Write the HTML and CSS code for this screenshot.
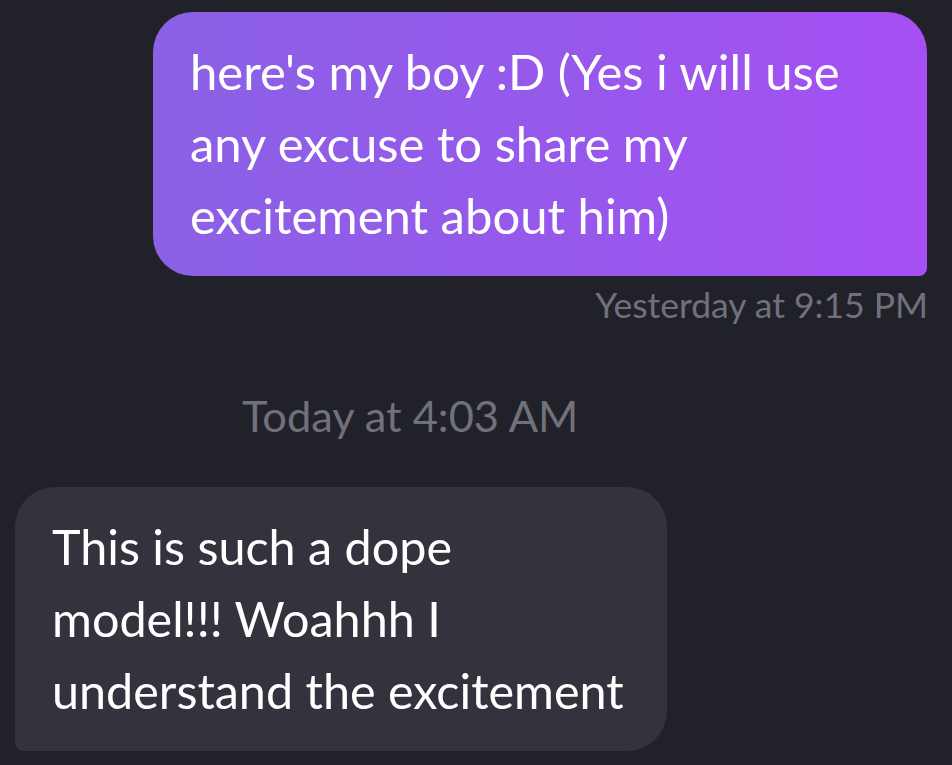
FILE: index.html
```html
<!DOCTYPE html>
<html lang="en">
<head>
<meta charset="utf-8">
<title>Chat</title>
<link rel="stylesheet" href="styles.css">
</head>
<body>
<main class="chat">
  <div class="msg msg-out">
    <div class="bubble bubble-out">here's my boy :D (Yes i will use<br>any excuse to share my<br>excitement about him)</div>
    <div class="stamp stamp-out">Yesterday at 9:15 PM</div>
  </div>
  <div class="day-stamp">Today at 4:03 AM</div>
  <div class="msg msg-in">
    <div class="bubble bubble-in">This is such a dope<br>model!!! Woahhh I<br>understand the excitement</div>
  </div>
</main>
</body>
</html>
```
FILE: styles.css
```css
html, body {
  margin: 0;
  padding: 0;
  background: #21212a;
}
body {
  font-family: "Lato", "Open Sans", sans-serif;
  color: #ffffff;
  width: 952px;
  height: 765px;
  overflow: hidden;
}
.chat {
  display: flex;
  flex-direction: column;
  padding: 12px 25px 0 15px;
}
.msg {
  display: flex;
  flex-direction: column;
}
.msg-out {
  align-items: flex-end;
}
.msg-in {
  align-items: flex-start;
}
.bubble {
  box-sizing: border-box;
  height: 264px;
  padding: 23px 37px 0 37px;
  line-height: 72px;
  white-space: nowrap;
}
.bubble-out {
  width: 774px;
  font-size: 49px;
  border-radius: 40px 40px 8px 40px;
  background: linear-gradient(90deg, #8b61e5 0%, #9758ec 55%, #a64ff4 100%);
}
.bubble-in {
  width: 652px;
  font-size: 48.5px;
  border-radius: 40px 40px 40px 8px;
  background: #33333d;
}
.stamp, .day-stamp {
  color: #71717c;
}
.stamp-out {
  margin-top: 9px;
  margin-right: -1px;
  font-size: 35.5px;
  line-height: 40px;
}
.day-stamp {
  margin-top: 65px;
  margin-left: 227px;
  margin-bottom: 47px;
  font-size: 43.4px;
  line-height: 50px;
}
```
